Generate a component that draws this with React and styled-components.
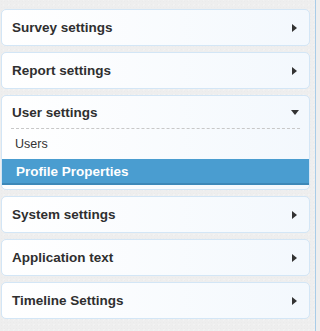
import React from "react";
import styled, { createGlobalStyle } from "styled-components";

const Global = createGlobalStyle`
  html, body { margin: 0; padding: 0; background: #eeeeee; }
  body { font-family: "Liberation Sans", Arial, sans-serif; }
`;

const Sidebar = styled.div`
  box-sizing: border-box;
  width: 316px;
  min-height: 100vh;
  padding: 9px 0 0 1px;
  border-right: 1px solid #a9cce8;
  display: flex;
  flex-direction: column;
  gap: 6px;
  background-color: #eeeeee;
  background-image:
    radial-gradient(rgba(0,0,0,0.012) 1px, transparent 1px),
    radial-gradient(rgba(255,255,255,0.25) 1px, transparent 1px);
  background-size: 3px 3px, 5px 5px;
  background-position: 0 0, 1px 2px;
`;

const Panel = styled.div`
  box-sizing: border-box;
  width: 309px;
  border: 1px solid #d3e6f6;
  border-radius: 5px;
  background: linear-gradient(to right, #ffffff 0%, #f3f8fd 100%);
  overflow: hidden;
  padding-bottom: ${(p) => (p.$open ? "4px" : "0")};
`;

const Header = styled.div`
  box-sizing: border-box;
  height: ${(p) => (p.$open ? "32px" : "35px")};
  padding: ${(p) => (p.$open ? "1px 10px 0 10px" : "0 12px 0 10px")};
  display: flex;
  align-items: center;
  justify-content: space-between;
  font-size: 13.5px;
  font-weight: bold;
  color: #2f2f2f;
`;

const Divider = styled.div`
  margin: 0 9px;
  border-top: 1px dashed #c8c8c8;
`;

const ArrowRight = styled.span`
  width: 0;
  height: 0;
  border-top: 4.5px solid transparent;
  border-bottom: 4.5px solid transparent;
  border-left: 5px solid #333333;
`;

const ArrowDown = styled.span`
  width: 0;
  height: 0;
  border-left: 4.5px solid transparent;
  border-right: 4.5px solid transparent;
  border-top: 5px solid #333333;
`;

const Item = styled.div`
  box-sizing: border-box;
  height: ${(p) => (p.$active ? "26px" : "30px")};
  display: flex;
  align-items: center;
  padding-left: ${(p) => (p.$active ? "14px" : "13px")};
  font-size: ${(p) => (p.$active ? "13.5px" : "12.5px")};
  font-weight: ${(p) => (p.$active ? "bold" : "normal")};
  color: ${(p) => (p.$active ? "#ffffff" : "#333333")};
  background: ${(p) => (p.$active ? "#4a9dd0" : "transparent")};
  border-bottom: ${(p) => (p.$active ? "2px solid #3d88b8" : "none")};
  padding-bottom: ${(p) => (p.$active ? "0" : "1px")};
`;

const sections = [
  { title: "Survey settings" },
  { title: "Report settings" },
  { title: "User settings", open: true, items: ["Users", "Profile Properties"], active: 1 },
  { title: "System settings" },
  { title: "Application text" },
  { title: "Timeline Settings" },
];

export default function App() {
  return (
    <>
      <Global />
      <Sidebar>
        {sections.map((s) => (
          <Panel key={s.title} $open={s.open}>
            <Header $open={s.open}>
              <span>{s.title}</span>
              {s.open ? <ArrowDown /> : <ArrowRight />}
            </Header>
            {s.open && (
              <>
                <Divider />
                {s.items.map((it, i) => (
                  <Item key={it} $active={i === s.active}>
                    {it}
                  </Item>
                ))}
              </>
            )}
          </Panel>
        ))}
      </Sidebar>
    </>
  );
}
